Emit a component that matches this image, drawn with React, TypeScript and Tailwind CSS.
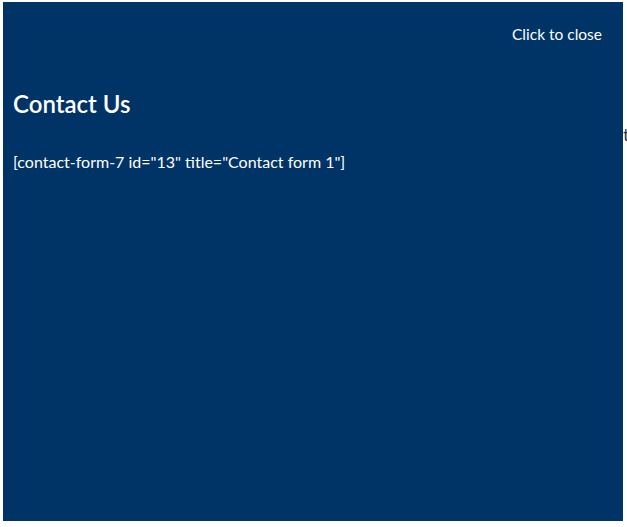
export default function App() {
  return (
    <div className="relative h-[527px] w-[627px] overflow-hidden bg-white font-['Lato','Liberation_Sans',sans-serif]">
      <div className="ml-[3px] mt-[2px] flex h-[519px] w-[620px] flex-col bg-[#003366] px-[10px] text-white">
        <div className="flex justify-end pr-[11px] pt-[22px]">
          <span className="text-[15.5px] leading-[20px]">Click to close</span>
        </div>
        <h2 className="mt-[45px] text-[24px] font-semibold leading-[30px]">Contact Us</h2>
        <p className="mt-[33px] text-[16px] leading-[20px]">[contact-form-7 id="13" title="Contact form 1"]</p>
      </div>
      <span className="absolute left-[623px] top-[122px] text-[18px] leading-[24px] text-[#333]">t</span>
    </div>
  );
}
